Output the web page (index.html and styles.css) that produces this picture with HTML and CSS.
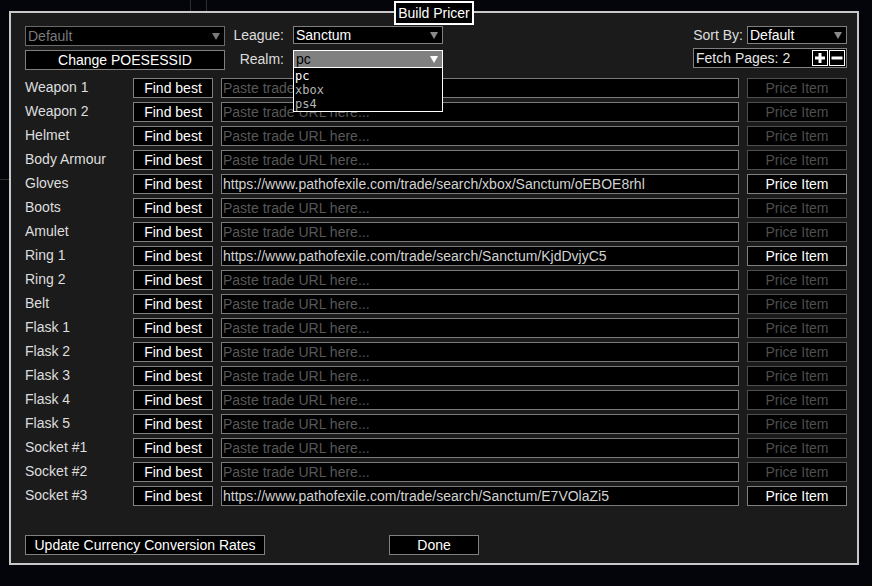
FILE: index.html
```html
<!DOCTYPE html>
<html lang="en">
<head>
  <meta charset="UTF-8">
  <title>Build Pricer</title>
  <link rel="stylesheet" href="styles.css">
</head>
<body>

<div class="bg-line v1"></div>
<div class="bg-line v2"></div>
<div class="bg-line h1"></div>

<div class="dialog">
  <div class="title">Build Pricer</div>

  <div class="top">
    <div class="account">
      <div class="select disabled tall">
        <span>Default</span>
        <svg class="arrow" width="8" height="7" viewBox="0 0 8 7"><path d="M0 0H8L4 7Z"/></svg>
      </div>
      <button class="btn">Change POESESSID</button>
    </div>

    <div class="realm-grid">
      <label>League:</label>
      <div class="select">
        <span>Sanctum</span>
        <svg class="arrow" width="8" height="7" viewBox="0 0 8 7"><path d="M0 0H8L4 7Z"/></svg>
      </div>
      <label>Realm:</label>
      <div class="select open">
        <span>pc</span>
        <svg class="arrow" width="8" height="7" viewBox="0 0 8 7"><path d="M0 0H8L4 7Z"/></svg>
        <div class="dropdown-list">
          <div class="opt active">pc</div>
          <div class="opt">xbox</div>
          <div class="opt">ps4</div>
        </div>
      </div>
    </div>

    <div class="sorting">
      <div class="sort-row">
        <label>Sort By:</label>
        <div class="select sort">
          <span>Default</span>
          <svg class="arrow" width="8" height="7" viewBox="0 0 8 7"><path d="M0 0H8L4 7Z"/></svg>
        </div>
      </div>
      <div class="fetch">
        <span class="fetch-text">Fetch Pages: 2</span>
        <button class="step"><svg width="14" height="14" viewBox="0 0 14 14"><rect x="2" y="5.5" width="10" height="3"/><rect x="5.5" y="2" width="3" height="10"/></svg></button>
        <button class="step"><svg width="14" height="14" viewBox="0 0 14 14"><rect x="1.5" y="5.5" width="11" height="3"/></svg></button>
      </div>
    </div>
  </div>

  <div class="items">
    <div class="item">
      <span class="slot">Weapon 1</span>
      <button class="btn">Find best</button>
      <input class="url" type="text" placeholder="Paste trade URL here...">
      <button class="btn" disabled>Price Item</button>
    </div>
    <div class="item">
      <span class="slot">Weapon 2</span>
      <button class="btn">Find best</button>
      <input class="url" type="text" placeholder="Paste trade URL here...">
      <button class="btn" disabled>Price Item</button>
    </div>
    <div class="item">
      <span class="slot">Helmet</span>
      <button class="btn">Find best</button>
      <input class="url" type="text" placeholder="Paste trade URL here...">
      <button class="btn" disabled>Price Item</button>
    </div>
    <div class="item">
      <span class="slot">Body Armour</span>
      <button class="btn">Find best</button>
      <input class="url" type="text" placeholder="Paste trade URL here...">
      <button class="btn" disabled>Price Item</button>
    </div>
    <div class="item">
      <span class="slot">Gloves</span>
      <button class="btn">Find best</button>
      <input class="url" type="text" placeholder="Paste trade URL here..." value="https://www.pathofexile.com/trade/search/xbox/Sanctum/oEBOE8rhl">
      <button class="btn">Price Item</button>
    </div>
    <div class="item">
      <span class="slot">Boots</span>
      <button class="btn">Find best</button>
      <input class="url" type="text" placeholder="Paste trade URL here...">
      <button class="btn" disabled>Price Item</button>
    </div>
    <div class="item">
      <span class="slot">Amulet</span>
      <button class="btn">Find best</button>
      <input class="url" type="text" placeholder="Paste trade URL here...">
      <button class="btn" disabled>Price Item</button>
    </div>
    <div class="item">
      <span class="slot">Ring 1</span>
      <button class="btn">Find best</button>
      <input class="url" type="text" placeholder="Paste trade URL here..." value="https://www.pathofexile.com/trade/search/Sanctum/KjdDvjyC5">
      <button class="btn">Price Item</button>
    </div>
    <div class="item">
      <span class="slot">Ring 2</span>
      <button class="btn">Find best</button>
      <input class="url" type="text" placeholder="Paste trade URL here...">
      <button class="btn" disabled>Price Item</button>
    </div>
    <div class="item">
      <span class="slot">Belt</span>
      <button class="btn">Find best</button>
      <input class="url" type="text" placeholder="Paste trade URL here...">
      <button class="btn" disabled>Price Item</button>
    </div>
    <div class="item">
      <span class="slot">Flask 1</span>
      <button class="btn">Find best</button>
      <input class="url" type="text" placeholder="Paste trade URL here...">
      <button class="btn" disabled>Price Item</button>
    </div>
    <div class="item">
      <span class="slot">Flask 2</span>
      <button class="btn">Find best</button>
      <input class="url" type="text" placeholder="Paste trade URL here...">
      <button class="btn" disabled>Price Item</button>
    </div>
    <div class="item">
      <span class="slot">Flask 3</span>
      <button class="btn">Find best</button>
      <input class="url" type="text" placeholder="Paste trade URL here...">
      <button class="btn" disabled>Price Item</button>
    </div>
    <div class="item">
      <span class="slot">Flask 4</span>
      <button class="btn">Find best</button>
      <input class="url" type="text" placeholder="Paste trade URL here...">
      <button class="btn" disabled>Price Item</button>
    </div>
    <div class="item">
      <span class="slot">Flask 5</span>
      <button class="btn">Find best</button>
      <input class="url" type="text" placeholder="Paste trade URL here...">
      <button class="btn" disabled>Price Item</button>
    </div>
    <div class="item">
      <span class="slot">Socket #1</span>
      <button class="btn">Find best</button>
      <input class="url" type="text" placeholder="Paste trade URL here...">
      <button class="btn" disabled>Price Item</button>
    </div>
    <div class="item">
      <span class="slot">Socket #2</span>
      <button class="btn">Find best</button>
      <input class="url" type="text" placeholder="Paste trade URL here...">
      <button class="btn" disabled>Price Item</button>
    </div>
    <div class="item">
      <span class="slot">Socket #3</span>
      <button class="btn">Find best</button>
      <input class="url" type="text" placeholder="Paste trade URL here..." value="https://www.pathofexile.com/trade/search/Sanctum/E7VOlaZi5">
      <button class="btn">Price Item</button>
    </div>
  </div>

  <div class="footer">
    <button class="btn update">Update Currency Conversion Rates</button>
    <button class="btn done">Done</button>
  </div>
</div>

</body>
</html>
```

FILE: styles.css
```css
* {
  box-sizing: border-box;
}
body {
  margin: 0;
  height: 586px;
  overflow: hidden;
  position: relative;
  background: #04050a;
  color: #dedede;
  font-family: "Liberation Sans", Arial, sans-serif;
  font-size: 14px;
}

/* app content behind the popup */
.bg-line {
  position: absolute;
  background: #2e2e2e;
}
.bg-line.v1 { left: 190px; top: 0; width: 1px; height: 11px; }
.bg-line.v2 { left: 206px; top: 0; width: 1px; height: 11px; }
.bg-line.h1 { left: 0; top: 179px; width: 9px; height: 1px; }

.dialog {
  position: relative;
  width: 850px;
  height: 554px;
  margin: 11px 0 0 9px;
  padding: 13px 10px 8px 14px;
  background: #1b1b1b;
  border: 2px solid #c8c8c8;
  display: flex;
  flex-direction: column;
}
.title {
  position: absolute;
  top: -12px;
  left: 383px;
  width: 80px;
  height: 24px;
  background: #000;
  border: 2px solid #fff;
  color: #fff;
  line-height: 20px;
  text-align: center;
}

.top {
  display: flex;
  gap: 8px;
}
.account {
  width: 200px;
  display: flex;
  flex-direction: column;
  gap: 4px;
}
.realm-grid {
  display: grid;
  grid-template-columns: 51px 150px;
  column-gap: 9px;
  row-gap: 6px;
  align-items: center;
  align-content: start;
}
.realm-grid label {
  text-align: right;
}
.sorting {
  margin-left: auto;
  width: 154px;
  display: flex;
  flex-direction: column;
  gap: 4px;
}
.sort-row {
  display: flex;
  justify-content: flex-end;
  align-items: center;
  gap: 4px;
}

.select {
  position: relative;
  height: 18px;
  padding: 0 4px 0 2px;
  background: #000;
  border: 1px solid #808080;
  color: #fff;
  display: flex;
  align-items: center;
  justify-content: space-between;
  line-height: 16px;
}
.select.tall {
  height: 20px;
}
.select.sort {
  width: 100px;
}
.arrow {
  fill: #8a8a8a;
}
.select.disabled {
  border-color: #6a6a6a;
  color: #7a7a7a;
}
.select.disabled .arrow {
  fill: #7a7a7a;
}
.select.open {
  background: #808080;
  border-color: #fff;
  color: #000;
}
.select.open .arrow {
  fill: #fff;
}
.dropdown-list {
  position: absolute;
  left: -1px;
  top: 16px;
  width: 150px;
  padding: 1px 0 0 1px;
  background: #000;
  border: 1px solid #fff;
  font-family: "DejaVu Sans Mono", monospace;
  font-size: 12px;
  line-height: 14px;
  color: #b4b4b4;
  z-index: 2;
}
.opt.active {
  color: #fff;
}

.fetch {
  height: 20px;
  padding: 0 1px 0 2px;
  background: #000;
  border: 1px solid #808080;
  display: flex;
  align-items: center;
  gap: 1px;
  color: #e6e6e6;
}
.fetch-text {
  flex: 1;
}
.step {
  width: 16px;
  height: 16px;
  padding: 0;
  background: #000;
  border: 1px solid #fff;
  display: flex;
  align-items: center;
  justify-content: center;
}
.step svg {
  fill: #fff;
}

.btn {
  height: 20px;
  padding: 0;
  background: #000;
  border: 1px solid #808080;
  color: #fff;
  font: inherit;
  line-height: 18px;
  text-align: center;
}
.btn:disabled {
  color: #4e4e4e;
  border-color: #4e4e4e;
}

.items {
  margin-top: 8px;
  display: flex;
  flex-direction: column;
  gap: 4px;
}
.item {
  display: grid;
  grid-template-columns: 100px 80px 518px 100px;
  column-gap: 8px;
  height: 20px;
}
.slot {
  line-height: 18px;
  white-space: nowrap;
}
.url {
  height: 20px;
  padding: 0 2px 0 1px;
  background: #000;
  border: 1px solid #7a7a7a;
  color: #d2d2d2;
  font: inherit;
  outline: none;
}
.url::placeholder {
  color: #585858;
  opacity: 1;
}

.footer {
  margin-top: auto;
  display: flex;
  gap: 124px;
}
.update {
  width: 240px;
}
.done {
  width: 90px;
}
```
